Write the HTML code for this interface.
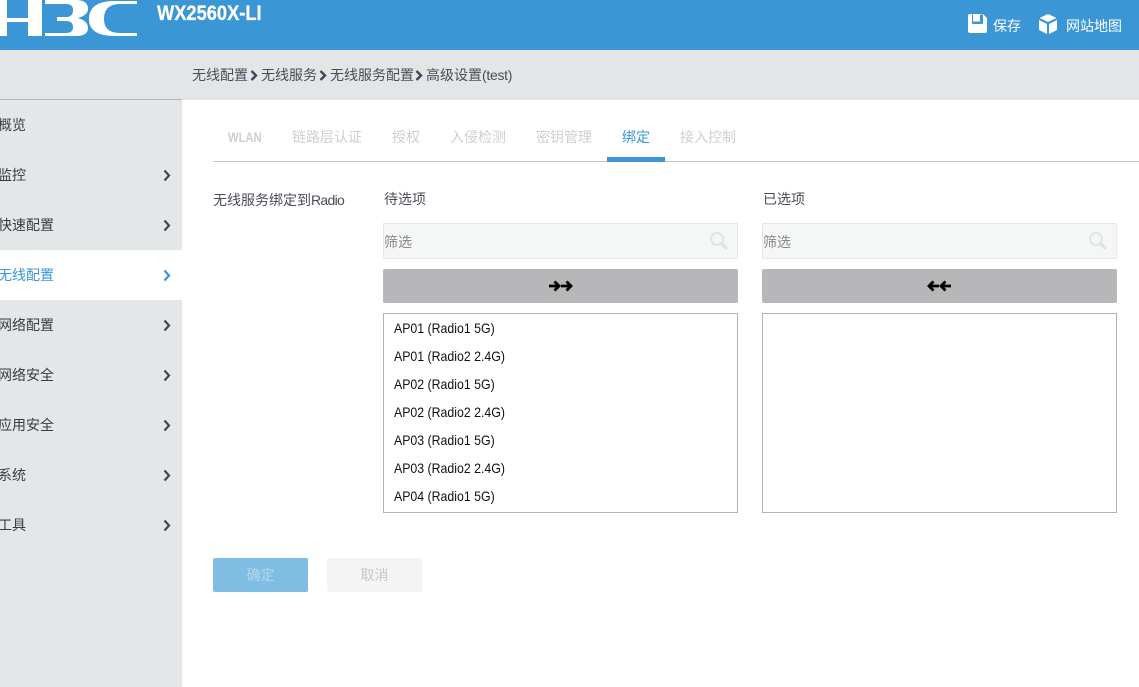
<!DOCTYPE html>
<html lang="zh">
<head>
<meta charset="utf-8">
<title>WX2560X-LI</title>
<style>
html,body{margin:0;padding:0;width:1139px;height:687px;overflow:hidden;background:#fff}
body{position:relative;font-family:"Liberation Sans","Noto Sans CJK SC",sans-serif;font-size:14px;color:#4a4a55}
.a{position:absolute;white-space:nowrap}
.side{position:absolute;left:0;top:100px;width:182px;height:587px;background:#e4e7e8}
.item{position:absolute;left:-2px;width:184px;height:50px;line-height:51px;font-size:14px;color:#3a3a44}
.item svg{position:absolute;left:165px;top:19px}
.tab{position:absolute;top:128px;font-size:14px;line-height:18px;color:#cfcfcf;white-space:nowrap}
.search{position:absolute;top:223px;width:353px;height:34px;background:#f5f7f6;border:1px solid #e6e8e8;line-height:36px;font-size:14px;color:#888}
.search svg{position:absolute;right:8px;top:7px}
.btn{position:absolute;top:269px;width:355px;height:34px;background:#b7b7b9;border-radius:2px}
.btn svg{position:absolute;left:165px;top:10px}
.list{position:absolute;top:313px;width:353px;height:198px;border:1px solid #b4b4b4;background:#fff}
.list div{position:absolute;left:10px;font-size:14px;line-height:16px;color:#111;white-space:nowrap;transform:scaleX(.88);transform-origin:0 0}
</style>
</head>
<body>
<div class="a" style="left:0;top:0;width:1139px;height:50px;background:#3a96d4"></div>
<svg class="a" style="left:0;top:0" width="140" height="40" viewBox="0 0 140 40" fill="#fff">
<path d="M0 0H7V18H28V0H42V36H28V22H7V36H0Z"/>
<path d="M45 0H76Q88 0 88 9Q88 15 78 18Q88 21 88 28Q88 36 76 36H45V33H66Q73 33 73 27Q73 21 66 21H57V17H66Q73 17 73 10Q73 4 66 4H45Z"/>
<path d="M137 1H115Q89 1 89 19Q89 36 115 36H137V33H120Q104 33 104 19Q104 4 120 4H137Z"/>
</svg>
<div class="a" style="left:157px;top:2px;font-size:21px;line-height:24px;font-weight:bold;color:#fff;transform:scaleX(.87);transform-origin:0 0;-webkit-text-stroke:.3px #fff">WX2560X-LI</div>

<svg class="a" style="left:968px;top:14px" width="19" height="19" viewBox="0 0 19 19" fill="#fff"><path d="M2 0H15L19 4V17Q19 19 17 19H2Q0 19 0 17V2Q0 0 2 0Z"/><path d="M4 0.5H15V9Q15 10 14 10H5Q4 10 4 9Z" fill="#3a96d4"/><path d="M5 0H12V7.500H5Z" fill="#fff"/></svg>
<div class="a" style="left:993px;top:17px;font-size:14px;line-height:18px;color:#fff">保存</div>
<svg class="a" style="left:1039px;top:14px" width="18" height="20" viewBox="0 0 18 20" fill="#fff"><path d="M9 0L17.500 4L9 8L.5 4Z"/><path d="M0 6L8 10V20L1 16.500Q0 16 0 15Z"/><path d="M18 6L10 10V20L17 16.500Q18 16 18 15Z"/></svg>
<div class="a" style="left:1066px;top:17px;font-size:14px;line-height:18px;color:#fff">网站地图</div>

<div class="a" style="left:0;top:50px;width:1139px;height:49px;background:#e4e5e7"></div>
<div class="a" style="left:0;top:99px;width:182px;height:1px;background:#b5b6b7"></div>
<div class="a" style="left:182px;top:99px;width:957px;height:1px;background:#e1e2e3"></div>
<div class="a" style="left:192px;top:66px;line-height:18px;color:#4c4c58">无线配置</div>
<svg class="a" style="left:250px;top:70px" width="8" height="11" viewBox="0 0 8 11"><path d="M1.500 1L6 5.500L1.500 10" fill="none" stroke="#44445a" stroke-width="2.400"/></svg>
<div class="a" style="left:261px;top:66px;line-height:18px;color:#4c4c58">无线服务</div>
<svg class="a" style="left:319px;top:70px" width="8" height="11" viewBox="0 0 8 11"><path d="M1.500 1L6 5.500L1.500 10" fill="none" stroke="#44445a" stroke-width="2.400"/></svg>
<div class="a" style="left:330px;top:66px;line-height:18px;color:#4c4c58">无线服务配置</div>
<svg class="a" style="left:415px;top:70px" width="8" height="11" viewBox="0 0 8 11"><path d="M1.500 1L6 5.500L1.500 10" fill="none" stroke="#44445a" stroke-width="2.400"/></svg>
<div class="a" style="left:426px;top:66px;line-height:18px;color:#4c4c58">高级设置<span style="letter-spacing:-.3px">(test)</span></div>

<div class="side"></div>
<div class="item" style="top:100px">概览</div>
<div class="item" style="top:150px">监控<svg width="8" height="13" viewBox="0 0 8 13"><path d="M1.500 1.500L6 6.500L1.500 11.500" fill="none" stroke="#44445a" stroke-width="2.200"/></svg></div>
<div class="item" style="top:200px">快速配置<svg width="8" height="13" viewBox="0 0 8 13"><path d="M1.500 1.500L6 6.500L1.500 11.500" fill="none" stroke="#44445a" stroke-width="2.200"/></svg></div>
<div class="a" style="left:0;top:250px;width:182px;height:50px;background:#fff"></div>
<div class="item" style="top:250px;color:#3a96d4">无线配置<svg width="8" height="13" viewBox="0 0 8 13"><path d="M1.500 1.500L6 6.500L1.500 11.500" fill="none" stroke="#3a96d4" stroke-width="2.200"/></svg></div>
<div class="item" style="top:300px">网络配置<svg width="8" height="13" viewBox="0 0 8 13"><path d="M1.500 1.500L6 6.500L1.500 11.500" fill="none" stroke="#44445a" stroke-width="2.200"/></svg></div>
<div class="item" style="top:350px">网络安全<svg width="8" height="13" viewBox="0 0 8 13"><path d="M1.500 1.500L6 6.500L1.500 11.500" fill="none" stroke="#44445a" stroke-width="2.200"/></svg></div>
<div class="item" style="top:400px">应用安全<svg width="8" height="13" viewBox="0 0 8 13"><path d="M1.500 1.500L6 6.500L1.500 11.500" fill="none" stroke="#44445a" stroke-width="2.200"/></svg></div>
<div class="item" style="top:450px">系统<svg width="8" height="13" viewBox="0 0 8 13"><path d="M1.500 1.500L6 6.500L1.500 11.500" fill="none" stroke="#44445a" stroke-width="2.200"/></svg></div>
<div class="item" style="top:500px">工具<svg width="8" height="13" viewBox="0 0 8 13"><path d="M1.500 1.500L6 6.500L1.500 11.500" fill="none" stroke="#44445a" stroke-width="2.200"/></svg></div>

<div class="tab" style="left:228px;font-weight:bold;transform:scaleX(.8);transform-origin:0 0">WLAN</div>
<div class="tab" style="left:292px">链路层认证</div>
<div class="tab" style="left:392px">授权</div>
<div class="tab" style="left:450px">入侵检测</div>
<div class="tab" style="left:536px">密钥管理</div>
<div class="tab" style="left:622px;color:#3a96d4">绑定</div>
<div class="tab" style="left:680px">接入控制</div>
<div class="a" style="left:213px;top:161px;width:926px;height:1px;background:#c8c8c8"></div>
<div class="a" style="left:607px;top:157px;width:58px;height:5px;background:#3a96d4"></div>

<div class="a" style="left:213px;top:191px;line-height:18px;color:#4c4c58">无线服务绑定到<span style="letter-spacing:-.7px">Radio</span></div>
<div class="a" style="left:384px;top:190px;line-height:18px;color:#4c4c58">待选项</div>
<div class="a" style="left:763px;top:190px;line-height:18px;color:#4c4c58">已选项</div>

<div class="search" style="left:383px">筛选<svg width="20" height="20" viewBox="0 0 20 20"><circle cx="8" cy="8" r="6" fill="none" stroke="#e2e4e4" stroke-width="2"/><path d="M12.500 12.500L18 18" stroke="#dfe1e1" stroke-width="3"/></svg></div>
<div class="search" style="left:762px">筛选<svg width="20" height="20" viewBox="0 0 20 20"><circle cx="8" cy="8" r="6" fill="none" stroke="#e2e4e4" stroke-width="2"/><path d="M12.500 12.500L18 18" stroke="#dfe1e1" stroke-width="3"/></svg></div>

<div class="btn" style="left:383px"><svg width="25" height="14" viewBox="0 0 25 14"><path d="M1 7H11M6.500 2.500L11 7L6.500 11.500M13 7H23M18.500 2.500L23 7L18.500 11.500" fill="none" stroke="#000" stroke-width="2.800"/></svg></div>
<div class="btn" style="left:762px"><svg width="25" height="14" viewBox="0 0 25 14"><path d="M12 7H2M6.500 2.500L2 7L6.500 11.500M24 7H14M18.500 2.500L14 7L18.500 11.500" fill="none" stroke="#000" stroke-width="2.800"/></svg></div>

<div class="list" style="left:383px">
<div style="top:6px">AP01 (Radio1 5G)</div>
<div style="top:34px">AP01 (Radio2 2.4G)</div>
<div style="top:62px">AP02 (Radio1 5G)</div>
<div style="top:90px">AP02 (Radio2 2.4G)</div>
<div style="top:118px">AP03 (Radio1 5G)</div>
<div style="top:146px">AP03 (Radio2 2.4G)</div>
<div style="top:174px">AP04 (Radio1 5G)</div>
</div>
<div class="list" style="left:762px"></div>

<div class="a" style="left:213px;top:558px;width:95px;height:34px;line-height:35px;text-align:center;background:#7fbde3;border-radius:2px;color:#b5d8ee">确定</div>
<div class="a" style="left:327px;top:558px;width:95px;height:34px;line-height:35px;text-align:center;background:#f4f4f4;border-radius:2px;color:#c6c6c6">取消</div>
</body>
</html>
